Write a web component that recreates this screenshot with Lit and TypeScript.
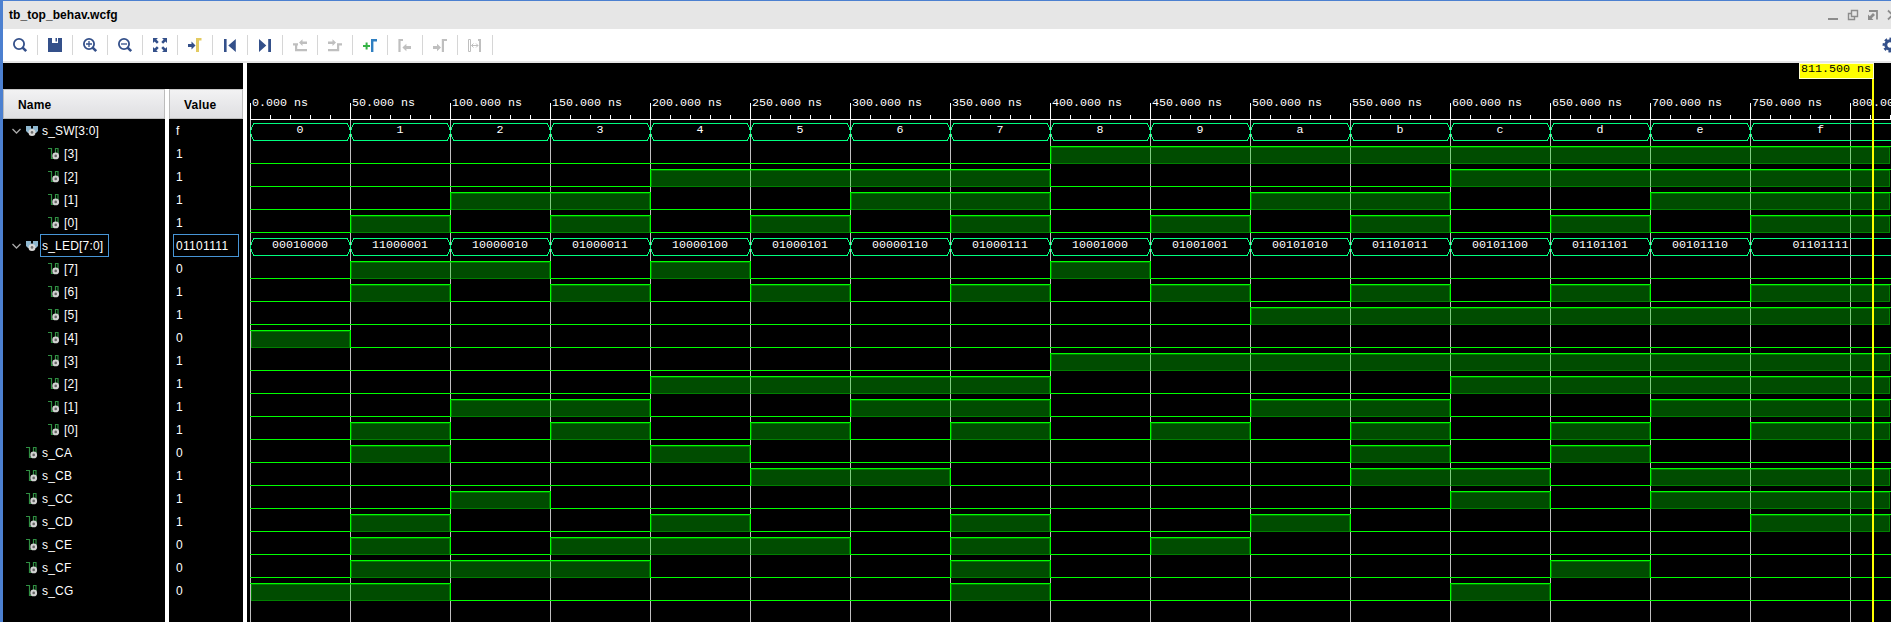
import { LitElement, html, svg, css } from "lit";
import { customElement } from "lit/decorators.js";

const ROW = 23;
const STEP = 100;
const WIDTH = 1644;
const HEIGHT = 559;
const X0 = 3;
const CHAR = 7;

interface Signal {
  name: string;
  value: string;
  kind: "bus" | "bit";
  depth: number;
  samples: string[];
  selected?: boolean;
}

const led = [
  "00010000", "11000001", "10000010", "01000011", "10000100", "01000101", "00000110", "01000111",
  "10001000", "01001001", "00101010", "01101011", "00101100", "01101101", "00101110", "01101111",
];
const sw = [..."0123456789abcdef"];
const swBits = sw.map((h) => parseInt(h, 16).toString(2).padStart(4, "0"));

const bitsOf = (words: string[], n: number): Signal[] =>
  Array.from({ length: n }, (_, i) => {
    const samples = words.map((w) => w[i]);
    return { name: `[${n - 1 - i}]`, value: samples[15], kind: "bit", depth: 1, samples };
  });

const single = (name: string, high: number[]): Signal => {
  const samples = sw.map((_, i) => (high.includes(i) ? "1" : "0"));
  return { name, value: samples[15], kind: "bit", depth: 0, samples };
};

const signals: Signal[] = [
  { name: "s_SW[3:0]", value: "f", kind: "bus", depth: 0, samples: sw },
  ...bitsOf(swBits, 4),
  { name: "s_LED[7:0]", value: led[15], kind: "bus", depth: 0, samples: led, selected: true },
  ...bitsOf(led, 8),
  single("s_CA", [1, 4, 11, 13]),
  single("s_CB", [5, 6, 11, 12, 14, 15]),
  single("s_CC", [2, 12, 14, 15]),
  single("s_CD", [1, 4, 7, 10, 15]),
  single("s_CE", [1, 3, 4, 5, 7, 9]),
  single("s_CF", [1, 2, 3, 7, 13]),
  single("s_CG", [0, 1, 7, 12]),
];

const NAVY = "#34508a";
const GREY = "#bfbfbf";
const lens = svg`<circle cx="7" cy="7" r="5.1" fill="none" stroke=${NAVY} stroke-width="1.8"/><path d="M10.6 10.6 14.2 14.2" stroke=${NAVY} stroke-width="2.6"/>`;

const tools = [
  lens,
  svg`<path fill=${NAVY} d="M1 1H5V6H11V1H15V15H1Z"/><path fill=${NAVY} d="M8.5 1H10V4.5H8.5Z"/>`,
  svg`${lens}<path d="M4 7H10M7 4V10" stroke=${NAVY} stroke-width="1.3"/>`,
  svg`${lens}<path d="M4 7H10" stroke=${NAVY} stroke-width="1.3"/>`,
  svg`<path fill=${NAVY} d="M1 1H6L4.4 2.6 6.7 4.9 4.9 6.7 2.6 4.4 1 6ZM15 1V6L13.4 4.4 11.1 6.7 9.3 4.9 11.6 2.6 10 1ZM1 15V10L2.6 11.6 4.9 9.3 6.7 11.1 4.4 13.4 6 15ZM15 15H10L11.6 13.4 9.3 11.1 11.1 9.3 13.4 11.6 15 10Z"/>`,
  svg`<path fill=${NAVY} d="M1 7H4.5V4.5L8.5 8.5 4.5 12.5V10H1Z"/><path fill="#e3cb62" d="M9 1H14.5V3.5H12V15H9Z"/>`,
  svg`<path fill=${NAVY} d="M2 2H4.6V15H2ZM13.8 2V15L6.3 8.5Z"/>`,
  svg`<path fill=${NAVY} d="M14 2H11.2V15H14ZM2 2V15L9.3 8.5Z"/>`,
  svg`<path fill=${GREY} d="M7 5.6 10.5 2.2V4.4H15V7H10.5V9ZM1 6.2H6V8.4H5.2V12H15V14.2H3V8.4H1Z"/>`,
  svg`<path fill=${GREY} d="M9 5.6 5.5 2.2V4.4H1V7H5.5V9ZM15 6.2H10V12H1V14.2H12.2V8.4H15Z"/>`,
  svg`<path fill="#35b345" d="M3.6 5.4H5.6V8H8V10H5.6V12.6H3.6V10H1V8H3.6Z"/><path fill="#2f7fc1" d="M9 2H15V4.4H11.4V15H9Z"/>`,
  svg`<path fill=${GREY} d="M1.4 2H6V4H3.6V15H1.4ZM5.4 10.5 9.4 6.8V9H14V12H9.4V14.2Z"/>`,
  svg`<path fill=${GREY} d="M15 2H9.8V15H12V4H15ZM9 10.5 5 6.8V9H1V12H5V14.2Z"/>`,
  svg`<path fill="none" stroke=${GREY} d="M1.5 2.5H3.5V14.5H1.5ZM4.5 8.5H11M6.5 6.5 4.5 8.5 6.5 10.5M9 6.5 11 8.5 9 10.5"/><path fill=${GREY} d="M11 2H14V15H12V4H11Z"/>`,
];

const busIcon = html`<svg width="12" height="12"><path d="M0 1H5V3.5H7V1H12V6L10 8H2L0 6Z" fill="#8fb8d0"/><circle cx="6" cy="7.4" r="3.5" fill="#d8d8d8"/><circle cx="6" cy="7.4" r="1.3" fill="#707070"/></svg>`;
const bitIcon = html`<svg width="12" height="13"><path d="M0 1.5H3.5V11.5H6M7.5 7V1.5H10V7" fill="none" stroke="#2f8f42" stroke-width="1.2"/><circle cx="7.7" cy="8.9" r="3.4" fill="#d2d2d2"/><circle cx="7.7" cy="8.9" r="1.3" fill="#666"/></svg>`;

const mono = (text: string, x: number, y: number, cls = "mono") =>
  svg`<text class=${cls} x=${x} y=${y} textLength=${text.length * CHAR} lengthAdjust="spacingAndGlyphs">${text}</text>`;

@customElement("app-root")
export class AppRoot extends LitElement {
  static styles = css`
    :host { display: block; }
    .window {
      box-sizing: border-box; width: 100%; height: 622px; overflow: hidden;
      display: flex; flex-direction: column;
      border-left: 3px solid #4c80d0; border-top: 1px solid #4c80d0;
      font: 12px "Liberation Sans", Arial, sans-serif; background: #fff;
    }
    .title {
      flex: none; height: 28px; display: flex; align-items: center; justify-content: space-between;
      background: #e6e6e6; padding-left: 6px; font-weight: bold; color: #000; letter-spacing: 0.05px;
    }
    .title svg { display: block; }
    .toolbar {
      flex: none; height: 32px; display: flex; align-items: center;
      border-bottom: 2px solid #e6e6e6; background: #fff;
    }
    .tool { width: 34px; height: 20px; display: flex; align-items: center; justify-content: center; border-right: 1px solid #d6d6d6; }
    .tool svg, .gear { display: block; }
    .spacer { flex: 1; }
    .gear { flex: none; }
    .body { flex: 1; display: flex; min-height: 0; }
    .panel { flex: none; width: 240px; background: #fff; }
    .blank { height: 26px; background: #000; }
    .table { display: grid; grid-template-columns: 162px 74px; column-gap: 4px; height: 533px; }
    .column { background: #000; color: #fff; }
    .head {
      box-sizing: border-box; height: 30px; display: flex; align-items: center; padding: 1px 0 0 14px;
      border: 1px solid #bcbcbc; border-top-color: #c8c8c8; color: #000; font-weight: bold; letter-spacing: 0.2px;
      background: linear-gradient(#f2f2f3, #dfdfe2);
    }
    .row { height: 23px; display: flex; align-items: center; }
    .name { padding-left: 9px; }
    .name.leaf { padding-left: 23px; }
    .name.child { padding-left: 45px; }
    .name svg { flex: none; display: block; }
    .name .chevron { margin-right: 5px; }
    .label {
      box-sizing: border-box; height: 23px; line-height: 22px; margin-left: 2px; padding: 0 5px 0 1px;
      border: 1px solid transparent; letter-spacing: 0.2px;
    }
    .value { padding-left: 4px; }
    .value .label { margin-left: 0; padding: 0 6px 0 2px; letter-spacing: 0.33px; }
    .value .on { width: 66px; }
    .label.on { border-color: #4795d6; }
    .gutter { flex: none; width: 4px; background: #fff; }
    .wave { flex: none; display: block; background: #000; }
    .mono { font: 10.9px "Liberation Mono", "Courier New", monospace; fill: #fff; white-space: pre; }
    .dark { fill: #000; }
  `;

  private busRow(s: Signal, i: number) {
    const t = 60 + ROW * i;
    const b = t + 17;
    return s.samples.map((v, k) => {
      const x = X0 + k * STEP;
      const last = k === 15;
      const e = last ? WIDTH + 10 : x + STEP;
      const mid = last ? (x + WIDTH) / 2 : x + 50;
      return svg`
        <path shape-rendering="crispEdges" fill="none" stroke="#00ff80" d="M${x + 0.5} ${t + 9}L${x + 1.5} ${t + 5}L${x + 4} ${t + 0.5}H${e - 3}L${e - 0.5} ${t + 5}L${e + 0.5} ${t + 9}L${e - 0.5} ${t + 13}L${e - 3} ${b + 0.5}H${x + 4}L${x + 1.5} ${t + 13}Z"/>
        ${mono(v, mid - (v.length * CHAR) / 2, t + 10)}`;
    });
  }

  private bitRow(s: Signal, i: number) {
    const t = 60 + ROW * i;
    const b = t + 17;
    const runs: { v: string; a: number; z: number }[] = [];
    s.samples.forEach((v, k) => {
      const r = runs[runs.length - 1];
      if (r && r.v === v) r.z = k + 1;
      else runs.push({ v, a: k, z: k + 1 });
    });
    return runs.map(({ v, a, z }) => {
      const x = X0 + a * STEP;
      const e = z === 16 ? WIDTH : X0 + z * STEP;
      const wall = a > 0 ? svg`<rect x=${x} y=${t} width="1" height="18" fill="#0f0"/>` : "";
      if (v === "0") return svg`<rect x=${x} y=${b} width=${e - x} height="1" fill="#0f0"/>${wall}`;
      const fe = z === 16 ? e - 1 : e;
      return svg`
        <rect x=${x + 1} y=${t + 1} width=${fe - x - 1} height="17" fill="#00e600" fill-opacity="0.33"/>
        <rect x=${x + 1.5} y=${t + 1.5} width=${fe - x - 2} height="16" fill="none" stroke="#00b400" stroke-opacity="0.5"/>
        <rect x=${x} y=${t} width=${e - x} height="1" fill="#0f0"/>${wall}`;
    });
  }

  private ruler() {
    const marks = Array.from({ length: 17 }, (_, k) => k);
    return svg`
      ${marks.map((k) => svg`<rect x=${X0 + k * STEP} y="57" width="1" height="502" fill="#bfbfbf"/>`)}
      ${marks.map((k) => svg`
        <rect x=${X0 + k * STEP} y="40" width="1" height="17" fill="#fff"/>
        ${[20, 40, 60, 80].map((d) => svg`<rect x=${X0 + k * STEP + d} y="52" width="1" height="4" fill="#fff"/>`)}
        ${mono(`${k * 50}.000 ns`, X0 + k * STEP + 2, 43)}`)}
      <rect x=${X0} y="56" width=${WIDTH} height="1" fill="#fff"/>`;
  }

  private nameRow(s: Signal) {
    const bus = s.kind === "bus";
    return html`<div class="row name ${bus ? "" : s.depth ? "child" : "leaf"}">
      ${bus
        ? html`<svg class="chevron" width="9" height="12"><path d="M0.5 4 4.5 8 8.5 4" fill="none" stroke="#a9a9a9" stroke-width="1.3"/></svg>${busIcon}`
        : bitIcon}
      <span class="label ${s.selected ? "on" : ""}">${s.name}</span>
    </div>`;
  }

  render() {
    return html`<div class="window">
      <div class="title">
        <span>tb_top_behav.wcfg</span>
        <svg width="64" height="28" fill="none" stroke="#8c8c8c">
          <path d="M1 18H11" stroke-width="2"/>
          <path d="M24.5 9.5H30.5V15.5H24.5ZM24 12.5H21.5V18.5H27.5V16" stroke-width="1.4"/>
          <path d="M42 10H50V18.5" stroke-width="1.8"/><path d="M41 19V13.5L42.8 15.3 46 12 48 14 44.7 17.2 46.5 19Z" fill="#8c8c8c" stroke="none"/>
          <path d="M61 9.5 70 18.5M61 18.5 70 9.5" stroke-width="1.8"/>
        </svg>
      </div>
      <div class="toolbar">
        ${tools.map((t) => html`<div class="tool"><svg width="16" height="16">${t}</svg></div>`)}
        <div class="spacer"></div>
        <svg class="gear" width="9" height="16"><circle cx="8" cy="8" r="4.2" fill="none" stroke="#34508a" stroke-width="3"/><circle cx="8" cy="8" r="6.2" fill="none" stroke="#34508a" stroke-width="2.4" stroke-dasharray="2.6 2.27" stroke-dashoffset="1.3"/></svg>
      </div>
      <div class="body">
        <div class="panel">
          <div class="blank"></div>
          <div class="table">
            <div class="column"><div class="head">Name</div>${signals.map((s) => this.nameRow(s))}</div>
            <div class="column"><div class="head">Value</div>${signals.map((s) => html`<div class="row value"><span class="label ${s.selected ? "on" : ""}">${s.value}</span></div>`)}</div>
          </div>
        </div>
        <div class="gutter"></div>
        <svg class="wave" width=${WIDTH} height=${HEIGHT}>
          ${this.ruler()}
          ${signals.map((s, i) => (s.kind === "bus" ? this.busRow(s, i) : this.bitRow(s, i)))}
          <rect x="1625" y="16" width="2" height="543" fill="#ff0"/>
          <rect x="1552" y="0" width="75" height="16" fill="#ffffd0"/>
          <rect x="1553" y="1" width="73" height="14" fill="#ff0"/>
          ${mono("811.500 ns", 1554, 9, "mono dark")}
        </svg>
      </div>
    </div>`;
  }
}
